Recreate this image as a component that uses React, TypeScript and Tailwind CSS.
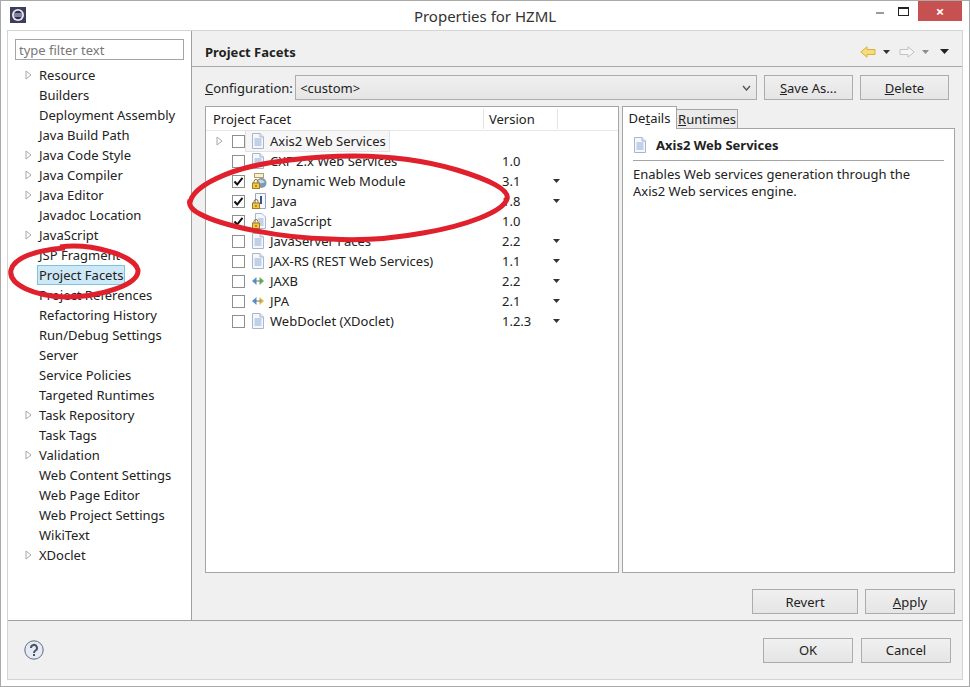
import type { ReactNode } from "react";

const TREE = [
  { label: "Resource", arrow: true },
  { label: "Builders" },
  { label: "Deployment Assembly" },
  { label: "Java Build Path" },
  { label: "Java Code Style", arrow: true },
  { label: "Java Compiler", arrow: true },
  { label: "Java Editor", arrow: true },
  { label: "Javadoc Location" },
  { label: "JavaScript", arrow: true },
  { label: "JSP Fragment" },
  { label: "Project Facets", selected: true },
  { label: "Project References" },
  { label: "Refactoring History" },
  { label: "Run/Debug Settings" },
  { label: "Server" },
  { label: "Service Policies" },
  { label: "Targeted Runtimes" },
  { label: "Task Repository", arrow: true },
  { label: "Task Tags" },
  { label: "Validation", arrow: true },
  { label: "Web Content Settings" },
  { label: "Web Page Editor" },
  { label: "Web Project Settings" },
  { label: "WikiText" },
  { label: "XDoclet", arrow: true },
];

type Facet = {
  name: string;
  version: string;
  checked?: boolean;
  icon: "page" | "web" | "java" | "lockpage" | "jaxb" | "jpa";
  menu?: boolean;
  selected?: boolean;
  arrow?: boolean;
};

const FACETS: Facet[] = [
  { name: "Axis2 Web Services", version: "", icon: "page", selected: true, arrow: true },
  { name: "CXF 2.x Web Services", version: "1.0", icon: "page" },
  { name: "Dynamic Web Module", version: "3.1", checked: true, icon: "web", menu: true },
  { name: "Java", version: "1.8", checked: true, icon: "java", menu: true },
  { name: "JavaScript", version: "1.0", checked: true, icon: "lockpage" },
  { name: "JavaServer Faces", version: "2.2", icon: "page", menu: true },
  { name: "JAX-RS (REST Web Services)", version: "1.1", icon: "page", menu: true },
  { name: "JAXB", version: "2.2", icon: "jaxb", menu: true },
  { name: "JPA", version: "2.1", icon: "jpa", menu: true },
  { name: "WebDoclet (XDoclet)", version: "1.2.3", icon: "page", menu: true },
];

function TreeArrow() {
  return (
    <svg width="7" height="10" viewBox="0 0 7 10" className="shrink-0">
      <path d="M1 1 L6 5 L1 9 Z" fill="#fff" stroke="#a8a8a8" />
    </svg>
  );
}

function PageIcon() {
  return (
    <svg width="14" height="16" viewBox="0 0 14 16" className="shrink-0">
      <path d="M1.5 .5 H9 L12.5 4 V15.5 H1.5 Z" fill="#f4f7fc" stroke="#a9b6cc" />
      <path d="M9 .5 V4 H12.5" fill="#dfe6f2" stroke="#a9b6cc" />
      <path d="M3.5 6 H10.5 M3.5 8 H10.5 M3.5 10 H10.5 M3.5 12 H10.5" stroke="#8eaad0" />
    </svg>
  );
}

function Lock() {
  return (
    <g>
      <path d="M3 10 V8.5 a2 2 0 0 1 4 0 V10" fill="none" stroke="#8a6d2c" />
      <rect x="1.5" y="10" width="7" height="5.5" fill="#f3c846" stroke="#a07c22" />
      <rect x="4.5" y="12" width="1" height="2" fill="#6d5416" />
    </g>
  );
}

function FacetIcon({ kind }: { kind: Facet["icon"] }) {
  if (kind === "page") return <PageIcon />;
  if (kind === "jaxb" || kind === "jpa") {
    return (
      <svg width="14" height="16" viewBox="0 0 14 16" className="shrink-0">
        <path d="M5.5 4 L1 8 L5.5 12 Z" fill="#5b8fc9" />
        <path d="M8.5 4 L13 8 L8.5 12 Z" fill={kind === "jaxb" ? "#5fb05a" : "#e0b648"} />
        <path d="M4 8 H10" stroke="#6a7a6a" />
      </svg>
    );
  }
  return (
    <svg width="16" height="16" viewBox="0 0 16 16" className="shrink-0">
      {kind === "web" && (
        <>
          <rect x="3.5" y=".5" width="9" height="4" fill="#f8efcf" stroke="#b79f63" />
          <circle cx="10.5" cy="10" r="5" fill="#7d9bb3" />
          <path d="M6.5 8 Q10 5 14 9 Q11 11 7 10 Z" fill="#c9d8e2" />
        </>
      )}
      {kind === "java" && (
        <>
          <path d="M4.5 .5 H14.5 V15.5 H4.5 Z" fill="#f7f8fb" stroke="#9aa6bd" />
          <path d="M10 3 V11" stroke="#33558f" strokeWidth="2" />
        </>
      )}
      {kind === "lockpage" && (
        <>
          <path d="M4.5 .5 H11 L14.5 4 V15.5 H4.5 Z" fill="#f4f7fc" stroke="#a9b6cc" />
          <path d="M7 6 H12.5 M8 8 H12.5 M9 10 H12.5 M9 12 H12.5" stroke="#8eaad0" />
        </>
      )}
      <Lock />
    </svg>
  );
}

function Checkbox({ checked }: { checked?: boolean }) {
  return (
    <span className="flex h-[13px] w-[13px] shrink-0 items-center justify-center border border-[#8e8e8e] bg-white">
      {checked && (
        <svg width="11" height="11" viewBox="0 0 11 11">
          <path d="M1.5 5.5 L4.2 8.5 L9.5 1.8" fill="none" stroke="#111" strokeWidth="2" />
        </svg>
      )}
    </span>
  );
}

function Caret({ color = "#333" }: { color?: string }) {
  return (
    <svg width="7" height="4" viewBox="0 0 7 4" className="shrink-0">
      <path d="M0 0 H7 L3.5 4 Z" fill={color} />
    </svg>
  );
}

function Button({ children, className }: { children: ReactNode; className: string }) {
  return (
    <div
      className={`flex h-[25px] items-center justify-center border border-[#acacac] bg-gradient-to-b from-[#f0f0f0] to-[#e5e5e5] text-[#222] ${className}`}
    >
      {children}
    </div>
  );
}

function NavArrow({ fill, stroke, flip }: { fill: string; stroke: string; flip?: boolean }) {
  return (
    <svg width="16" height="12" viewBox="0 0 16 12" className={flip ? "-scale-x-100" : ""}>
      <path d="M.8 6 L7 .8 V3.5 H15 V8.5 H7 V11.2 Z" fill={fill} stroke={stroke} />
    </svg>
  );
}

export default function App() {
  return (
    <div className="relative flex h-[687px] w-[970px] flex-col overflow-hidden border border-[#a9a9a9] bg-white font-['Noto_Sans',sans-serif] text-[13px] leading-[20px] text-[#222]">
      <header className="relative flex h-[29px] shrink-0 items-center justify-center">
        <svg width="16" height="16" viewBox="0 0 16 16" className="absolute left-[9px] top-[6px]">
          <rect width="16" height="16" fill="#3d3d5c" />
          <circle cx="8" cy="8" r="6" fill="#e6e6ef" />
          <circle cx="8" cy="8" r="4.2" fill="#2e2e55" />
          <path d="M4 7 H12 M4 9 H12" stroke="#d8d8e6" />
        </svg>
        <h1 className="text-[15px] font-normal text-[#333]">Properties for HZML</h1>
        <div className="absolute right-[7px] top-0 flex items-center">
          <span className="mr-[14px] mt-[4px] h-[2px] w-[8px] bg-[#9a9a9a]" />
          <span className="mr-[9px] h-[9px] w-[11px] border border-t-2 border-[#222]" />
          <span className="flex h-[20px] w-[44px] items-center justify-center bg-[#c75050] text-[15px] font-bold text-white">
            ×
          </span>
        </div>
      </header>

      <div className="mx-[6px] mb-[6px] flex min-h-0 flex-1 flex-col border border-[#d4d4d4]">
        <div className="flex min-h-0 flex-1">
          <aside className="flex w-[184px] shrink-0 flex-col border-r border-[#a0a0a0] bg-white">
            <div className="mx-[7px] mt-[8px] flex h-[21px] items-center border border-[#a5a5a5] px-[3px] text-[#777]">
              type filter text
            </div>
            <ul className="mt-[5px]">
              {TREE.map((item) => (
                <li key={item.label} className="flex h-[20px] items-center">
                  <span className="flex w-[31px] justify-end pr-[7px]">{item.arrow && <TreeArrow />}</span>
                  <span
                    className={
                      item.selected
                        ? "ml-[-2px] border border-[#7cc3e0] bg-[#cde8f7] px-[1px] leading-[18px]"
                        : ""
                    }
                  >
                    {item.label}
                  </span>
                </li>
              ))}
            </ul>
          </aside>

          <main className="flex min-w-0 flex-1 flex-col bg-[#f0f0f0]">
            <div className="flex h-[36px] shrink-0 items-center justify-between border-b border-[#a8a8a8] pl-[13px] pr-[13px] pt-[6px]">
              <h2 className="text-[13px] font-bold">Project Facets</h2>
              <div className="flex items-center">
                <NavArrow fill="#f7dc7e" stroke="#d8b13c" />
                <span className="ml-[7px]"><Caret /></span>
                <span className="ml-[9px]"><NavArrow fill="#f6f6f6" stroke="#c2c2c2" flip /></span>
                <span className="ml-[7px]"><Caret color="#8c8c8c" /></span>
                <span className="ml-[11px]">
                  <svg width="9" height="5" viewBox="0 0 9 5"><path d="M0 0 H9 L4.5 5 Z" fill="#222" /></svg>
                </span>
              </div>
            </div>

            <div className="mx-[13px] mt-[8px] flex h-[25px] shrink-0 items-center">
              <span className="w-[91px]"><u>C</u>onfiguration:</span>
              <div className="flex h-[25px] w-[466px] items-center justify-between border border-[#acacac] bg-gradient-to-b from-[#f0f0f0] to-[#e5e5e5] pl-[4px] pr-[5px]">
                &lt;custom&gt;
                <svg width="9" height="6" viewBox="0 0 9 6"><path d="M1 1 L4.5 5 L8 1" fill="none" stroke="#555" strokeWidth="1.4" /></svg>
              </div>
              <Button className="ml-[7px] w-[90px]"><span><u>S</u>ave As...</span></Button>
              <Button className="ml-[7px] w-[90px]"><span><u>D</u>elete</span></Button>
            </div>

            <div className="ml-[13px] mr-[7px] mt-[6px] flex min-h-0 flex-1 gap-[3px]">
              <section className="flex w-[414px] shrink-0 flex-col border border-[#a5a5a5] bg-white">
                <div className="flex h-[24px] shrink-0 items-center border-b border-[#e8e8e8]">
                  <span className="w-[278px] border-r border-[#e4e4e4] pl-[7px]">Project Facet</span>
                  <span className="w-[74px] border-r border-[#e4e4e4] pl-[5px]">Version</span>
                </div>
                <ul>
                  {FACETS.map((f) => (
                    <li key={f.name} className="flex h-[20px] items-center">
                      <span className="flex w-[18px] justify-end pr-[1px]">{f.arrow && <TreeArrow />}</span>
                      <span className="ml-[8px]"><Checkbox checked={f.checked} /></span>
                      <span
                        className={`ml-[1px] flex w-[253px] items-center ${f.selected ? "" : ""}`}
                      >
                        <span
                          className={`flex h-[20px] items-center gap-[5px] pl-[5px] pr-[3px] ${
                            f.selected ? "bg-[#f6f6f6] outline outline-[#e2e2e2]" : ""
                          }`}
                        >
                          <FacetIcon kind={f.icon} />
                          <span>{f.name}</span>
                        </span>
                      </span>
                      <span className="w-[54px] pl-[3px]">{f.version}</span>
                      <span>{f.menu && <Caret />}</span>
                    </li>
                  ))}
                </ul>
              </section>

              <section className="relative flex min-w-0 flex-1 flex-col">
                <div className="z-10 flex h-[23px] shrink-0 items-end">
                  <span className="flex h-[23px] w-[55px] items-center justify-center border border-b-0 border-[#a5a5a5] bg-white">
                    De<u>t</u>ails
                  </span>
                  <span className="flex h-[20px] w-[61px] items-center justify-center border border-l-0 border-[#a5a5a5] bg-[#eaeaea]">
                    <span><u>R</u>untimes</span>
                  </span>
                </div>
                <div className="-mt-px flex min-h-0 flex-1 flex-col border border-[#a5a5a5] bg-white px-[10px]">
                  <div className="flex h-[32px] shrink-0 items-center gap-[9px] border-b border-[#a5a5a5] pt-[1px]">
                    <PageIcon />
                    <strong className="font-bold">Axis2 Web Services</strong>
                  </div>
                  <p className="mt-[5px] leading-[17px]">
                    Enables Web services generation through the Axis2 Web services engine.
                  </p>
                </div>
              </section>
            </div>

            <div className="mr-[7px] mt-[16px] mb-[6px] flex shrink-0 justify-end gap-[7px]">
              <Button className="w-[106px]">Revert</Button>
              <Button className="w-[90px]"><span><u>A</u>pply</span></Button>
            </div>
          </main>
        </div>

        <footer className="flex h-[59px] shrink-0 items-center justify-between border-t border-[#a0a0a0] bg-[#f0f0f0] pl-[16px] pr-[11px]">
          <svg width="20" height="20" viewBox="0 0 20 20">
            <circle cx="10" cy="10" r="9.2" fill="#e4ebf5" stroke="#5e6a80" />
            <path d="M7 8 a3 3 0 1 1 4.5 2.5 Q10 11.5 10 13" fill="none" stroke="#4a5568" strokeWidth="2" />
            <rect x="9" y="14" width="2" height="2" fill="#4a5568" />
          </svg>
          <div className="flex gap-[8px]">
            <Button className="w-[90px] border-[#4a9ad8]">OK</Button>
            <Button className="w-[90px]">Cancel</Button>
          </div>
        </footer>
      </div>

      {/* red marker circles drawn over the dialog */}
      <svg width="970" height="687" className="pointer-events-none absolute left-[-1px] top-[-1px]">
        <path
          d="M190 203 C192 188 225 167 290 160 C340 154 400 153 457 170 C490 180 510 190 507 199 C503 212 465 226 423 233 C390 239 360 241 330 239 C280 238 222 226 200 214 C192 210 188 206 190 200"
          fill="none"
          stroke="#e0202c"
          strokeWidth="5"
        />
        <path
          d="M60 247 C90 243 135 255 138 270 C139 285 100 297 65 297 C35 296 8 285 11 270 C14 258 35 250 65 248"
          fill="none"
          stroke="#e0202c"
          strokeWidth="5"
        />
      </svg>
    </div>
  );
}
